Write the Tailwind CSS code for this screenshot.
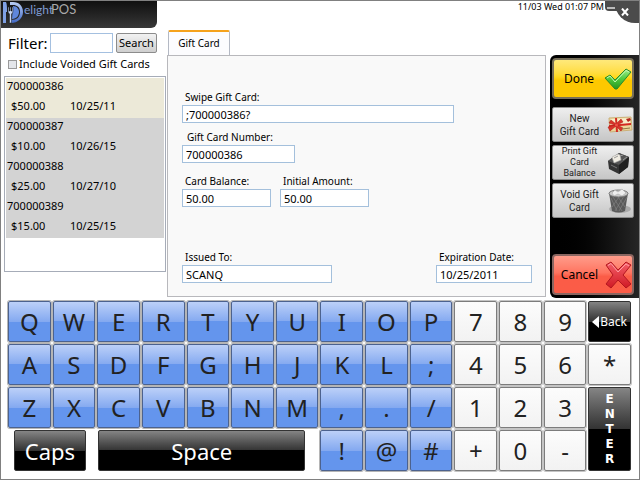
<!DOCTYPE html>
<html lang="en">
<head>
  <meta charset="UTF-8">
  <meta name="viewport" content="width=device-width,initial-scale=1.0"/>
  <title>DelightPOS - Gift Card</title>
  <script src="https://cdn.jsdelivr.net/npm/@tailwindcss/browser@4"></script>
</head>
<body class="min-h-screen flex flex-col bg-white text-black border border-[#808080] font-['Noto_Sans',sans-serif] text-[11px]">

  <!-- Title bar -->
  <header class="relative h-[27px] flex items-start justify-between">
    <h1 class="w-[156px] h-[27px] shrink-0 flex rounded-br-md bg-linear-to-b from-[#101010] to-[#383838] font-[Lato,sans-serif] leading-4">
      <svg class="ml-px w-[22px] h-6 shrink-0" viewBox="0 0 22 24" role="img" aria-label="D">
        <defs>
          <linearGradient id="plate" x1="0" y1="0" x2="0" y2="1">
            <stop offset="0" stop-color="#b9cdf3"/><stop offset="1" stop-color="#3f67c4"/>
          </linearGradient>
        </defs>
        <path d="M8 1h3c6 0 10 4 10 10s-5 11-12 11H7l2-3c6 0 9-3 9-8s-3-7-7-7H8z" fill="url(#plate)"/>
        <path d="M11 5c4 0 6 3 6 6s-2 7-7 7z" fill="#5f87dc"/>
        <path d="M1 1h3c1 2 1 6 1 10H4v11H1z" fill="#7fa0e4"/>
        <path d="M6 6v4q0 2 1.500 3v9h2v-9q1.500-1 1.500-3V6h-1v4h-1V6H8v4H7V6z" fill="#c5d4f4" stroke="#15181f" stroke-width=".5"/>
      </svg>
      <span class="text-[12px] leading-[17px] text-[#7f9bd3] w-[27px]">elight</span>
      <span class="text-[13px] text-[#a9a9a9]">POS</span>
    </h1>
    <time class="mr-[35px] text-[9px] leading-[11px] whitespace-nowrap">11/03 Wed 01:07 PM</time>
    <button aria-label="Minimize" class="absolute right-[22px] top-0 w-3 h-[10px] rounded-bl-sm bg-[#4b4b4b] flex items-end justify-center pb-0.5">
      <span class="w-2 h-0.5 bg-[#bbb]"></span>
    </button>
    <button aria-label="Close" class="absolute right-0 top-0 w-6 h-[22px] rounded-bl-[20px] bg-[#4b4b4b] flex items-center justify-center pr-1">
      <svg class="w-2 h-2" viewBox="0 0 8 8" stroke="#fff" stroke-width="2"><path d="M1 0.5l6 7M7 0.5l-6 7"/></svg>
    </button>
  </header>

  <main class="flex-1 flex">
    <!-- Card list -->
    <section class="w-[162px] shrink-0 ml-[3px] pt-[5px] flex flex-col">
      <div class="flex items-center h-5 pl-1">
        <label for="filter" class="w-[42px] text-[15px] leading-5">Filter:</label>
        <input id="filter" type="text" class="w-[63px] h-5 border border-[#a4c0e0] bg-white px-1">
        <button class="ml-[3px] w-[41px] h-5 rounded-xs border border-[#8c8c8c] bg-linear-to-b from-[#f2f2f2] to-[#cfcfcf] leading-4">Search</button>
      </div>
      <div class="flex items-center h-4 mt-[3px] pl-1">
        <input id="voided" type="checkbox" class="appearance-none w-[9px] h-[9px] border border-[#9a9a9a] bg-[#e4e6ea] checked:bg-[#4b6ea8]">
        <label for="voided" class="ml-0.5 leading-4 whitespace-nowrap">Include Voided Gift Cards</label>
      </div>
      <ul id="cards" class="mt-1 mb-[26px] flex-1 border border-[#a6acb8] p-px leading-4"></ul>
    </section>

    <!-- Card details -->
    <section class="flex-1 flex flex-col ml-px pt-0.5 pb-px">
      <div role="tablist" class="h-[25px] pl-px flex">
        <button role="tab" aria-selected="true" class="w-[62px] border-x border-[#b4b9c4] border-t-2 border-t-[#f5a21c] rounded-t-xs bg-[#fcfcfe] text-[10px]">Gift Card</button>
      </div>
      <form class="flex-1 flex flex-col border border-[#b8b8bc] bg-[#f9f9f9] pt-[33px] pl-3.5 pr-[13px] pb-[13px] text-[10px] leading-4">
        <label for="swipe" class="pl-[3px]">Swipe Gift Card:</label>
        <input id="swipe" type="text" value=";700000386?" class="w-[272px] h-[18px] border border-[#a4c0dc] bg-white px-[3px] text-[11px]">
        <label for="number" class="mt-1.5 pl-[5px]">Gift Card Number:</label>
        <input id="number" type="text" value="700000386" class="w-[113px] h-[18px] border border-[#a4c0dc] bg-white px-[3px] text-[11px]">
        <div class="mt-2.5 flex gap-[9px]">
          <div class="w-[89px]">
            <label for="balance" class="block pl-[3px]">Card Balance:</label>
            <input id="balance" type="text" value="50.00" class="block w-full h-[18px] border border-[#a4c0dc] bg-white px-[3px] text-[11px]">
          </div>
          <div class="w-[89px]">
            <label for="initial" class="block pl-[3px] whitespace-nowrap">Initial Amount:</label>
            <input id="initial" type="text" value="50.00" class="block w-full h-[18px] border border-[#a4c0dc] bg-white px-[3px] text-[11px]">
          </div>
        </div>
        <div class="mt-auto flex justify-between">
          <div class="w-[150px]">
            <label for="issued" class="block pl-[3px]">Issued To:</label>
            <input id="issued" type="text" value="SCANQ" class="block w-full h-[18px] border border-[#a4c0dc] bg-white px-[3px] text-[11px]">
          </div>
          <div class="w-[96px]">
            <label for="expires" class="block pl-[3px] whitespace-nowrap">Expiration Date:</label>
            <input id="expires" type="text" value="10/25/2011" class="block w-full h-[18px] border border-[#a4c0dc] bg-white px-[3px] text-[11px]">
          </div>
        </div>
      </form>
    </section>

    <!-- Actions -->
    <aside class="w-[89px] shrink-0 ml-1 mt-[27px] rounded-l-md bg-linear-to-r from-black to-[#262626] pl-0.5 pr-[5px] pt-[3px] pb-[3px] flex flex-col">
      <button class="h-[41px] rounded-sm border-2 border-[#77705a] bg-linear-to-b from-[#ffe97a] from-0% via-[#ffd91f] via-45% to-[#fdc800] to-55% flex items-center">
        <span class="flex-1 text-[12px] leading-4">Done</span>
        <svg class="w-7 h-6 shrink-0" viewBox="0 0 28 24">
          <defs>
            <linearGradient id="tick" x1="0" y1="0" x2="0" y2="1">
              <stop offset="0" stop-color="#a2ee8b"/><stop offset=".5" stop-color="#4ec93e"/><stop offset="1" stop-color="#24961f"/>
            </linearGradient>
          </defs>
          <path d="M1 11l5-3 5 5L22 2l5 3-14 17h-2z" fill="url(#tick)" stroke="#2c8a28" stroke-linejoin="round"/>
          <path d="M3 11l3-2 5 6L22 3.500l3 1.500" fill="none" stroke="#c4f8b4"/>
        </svg>
      </button>
      <button class="mt-2 h-[35px] rounded-xs border border-[#8a8a8a] bg-linear-to-b from-[#efefef] to-[#c6c6c6] flex items-center">
        <span class="flex-1 font-[Roboto,sans-serif] text-[10px] leading-[13px] text-[#222] whitespace-nowrap">New<br>Gift Card</span>
        <svg class="w-[27px] h-5 shrink-0" viewBox="0 0 27 20">
          <path d="M3 3l22-1 1 13-22 2z" fill="#ecd69b" stroke="#cbb078"/>
          <path d="M5 4l19-1v6L5 12z" fill="#f7ecc8"/>
          <path d="M3 10l22-2v2L3 12zM9 3h2l1 14h-2z" fill="#d32a22"/>
          <path d="M10 9L5 5 3 8l6 2-7 2 2 4 6-5 5 5 2-3-6-3 6-3-2-3z" fill="#d9332a" stroke="#a91812" stroke-width=".5"/>
          <circle cx="10.500" cy="10" r="1.500" fill="#f05045"/>
          <path d="M20 4l4-1 1 2-3 2z" fill="#b5261e"/>
          <path d="M16 14l8-1" stroke="#8f7947"/>
        </svg>
      </button>
      <button class="mt-[3px] h-[35px] rounded-xs border border-[#8a8a8a] bg-linear-to-b from-[#efefef] to-[#c6c6c6] flex items-center">
        <span class="flex-1 font-[Roboto,sans-serif] text-[9px] leading-[11px] text-[#222] whitespace-nowrap">Print Gift<br>Card<br>Balance</span>
        <svg class="w-[27px] h-6 shrink-0" viewBox="0 0 27 24">
          <path d="M2 10l11-8 10 4-1 10-9 7-10-5z" fill="#343434"/>
          <path d="M2 10l11-8 10 4-10 8z" fill="#555"/>
          <path d="M13 14l10-8-1 10-9 7z" fill="#1f1f1f"/>
          <path d="M6 6l6-3 2 1 1 5-7 3z" fill="#f0ece2" stroke="#aaa" stroke-width=".6"/>
          <path d="M8 7l4-2M14 5l3-1M17 9l4-3" stroke="#999"/>
          <path d="M5 14l6 3" stroke="#777"/>
        </svg>
      </button>
      <button class="mt-[3px] h-[35px] rounded-xs border border-[#8a8a8a] bg-linear-to-b from-[#efefef] to-[#c6c6c6] flex items-center">
        <span class="flex-1 font-[Roboto,sans-serif] text-[10px] leading-[13px] text-[#222] whitespace-nowrap">Void Gift<br>Card</span>
        <svg class="w-[27px] h-[26px] shrink-0" viewBox="0 0 27 26">
          <ellipse cx="14" cy="21" rx="11" ry="4" fill="#aaa"/>
          <path d="M3 5l3 18q7 3 13 0l3-18z" fill="#5a5a5a"/>
          <path d="M7 9l9 14M12 9l7 10M18 8l-9 15M13 9L6 19M5 10l6 13M21 9l-8 14" stroke="#888" stroke-width=".6"/>
          <ellipse cx="12.500" cy="5.500" rx="9.500" ry="3.500" fill="#ccc" stroke="#777"/>
          <path d="M6 5l3-3 3 2 4-3 4 4-4 3-4-2-4 2z" fill="#eee" stroke="#aaa" stroke-width=".6"/>
        </svg>
      </button>
      <button class="mt-auto h-[41px] rounded-sm border-2 border-[#8a6661] bg-linear-to-b from-[#ff9c8b] from-0% via-[#ff7460] via-45% to-[#fb5c47] to-55% flex items-center">
        <span class="flex-1 text-[12px] leading-4">Cancel</span>
        <svg class="w-[27px] h-7 shrink-0" viewBox="0 0 27 28">
          <defs>
            <linearGradient id="cross" x1="0" y1="0" x2="0" y2="1">
              <stop offset="0" stop-color="#f4606a"/><stop offset="1" stop-color="#d01924"/>
            </linearGradient>
          </defs>
          <path d="M1 4l5-3 7 8 8-8 5 3-8 10 8 9-5 4-8-8-7 8-5-4 7-9z" fill="url(#cross)" stroke="#b3161f" stroke-linejoin="round"/>
          <path d="M3 4.500l3-2 7 8.500 8-8 3 2" fill="none" stroke="#ff9ca2"/>
        </svg>
      </button>
    </aside>
  </main>

  <!-- On-screen keyboard, filled in by the script -->
  <section id="keyboard" aria-label="Keyboard" class="grid grid-cols-14 gap-0.5 pt-[3px] pl-[7px] pr-2 pb-2"></section>

  <script>
    // ---- CARD LIST ----
    const cards = [
      { number: '700000386', balance: '$50.00', date: '10/25/11' },
      { number: '700000387', balance: '$10.00', date: '10/26/15' },
      { number: '700000388', balance: '$25.00', date: '10/27/10' },
      { number: '700000389', balance: '$15.00', date: '10/25/15' },
    ];
    document.getElementById('cards').innerHTML = cards.map((c, i) => `
      <li class="${i === 0 ? 'bg-[#ece9d8]' : 'bg-[#d3d3d3]'} pl-px">
        <div class="h-5">${c.number}</div>
        <div class="h-5 flex pl-1"><span class="w-[59px]">${c.balance}</span><span>${c.date}</span></div>
      </li>`).join('');

    // ---- KEYBOARD ----
    const letterKey = 'h-[41px] rounded-xs border border-[#4c628e] shadow-[0_0_0_1px_#b5b5b5] bg-linear-to-b from-[#bcd0f8] from-0% via-[#84a9f0] via-50% to-[#6495ed] to-50% text-[24px] leading-8 text-[#222]';
    const numberKey = 'h-[41px] rounded-xs border border-[#7c7c7c] shadow-[0_0_0_1px_#c4c4c4] bg-linear-to-b from-[#fcfcfc] to-[#f2f2f2] text-[24px] leading-8 text-[#222]';
    const blackKey = 'rounded-xs border border-[#333] bg-linear-to-b from-[#858585] from-0% via-[#333] via-50% to-black to-50% text-white';
    const rows = ['QWERTYUIOP789', 'ASDFGHJKL;456*', 'ZXCVBNM,./123'];

    function key(ch, col) {
      return `<button class="${col < 10 ? letterKey : numberKey}">${ch}</button>`;
    }
    function keyRow(row) {
      return [...row].map(key).join('');
    }

    document.getElementById('keyboard').innerHTML =
      keyRow(rows[0]) +
      `<button class="${blackKey} flex items-center justify-center text-[12px]">
        <svg class="w-[7px] h-3 mr-px" viewBox="0 0 7 12"><path d="M7 0v12L0 6z" fill="#fff"/></svg>Back
      </button>` +
      keyRow(rows[1]) +
      keyRow(rows[2]) +
      `<button class="${blackKey} row-span-2 flex flex-col items-center justify-center font-['DejaVu_Sans',sans-serif] text-[12px] leading-[15px] font-bold" aria-label="Enter">
        ${[...'ENTER'].map(ch => `<span>${ch}</span>`).join('')}
      </button>` +
      `<div class="col-span-7 flex gap-3 pl-1.5 pr-[13px]">
        <button class="${blackKey} w-[72px] text-[22px] leading-8">Caps</button>
        <button class="${blackKey} flex-1 text-[22px] leading-8">Space</button>
      </div>` +
      [...'!@#+0-'].map((ch, i) => key(ch, i + 7)).join('');
  </script>
</body>
</html>
